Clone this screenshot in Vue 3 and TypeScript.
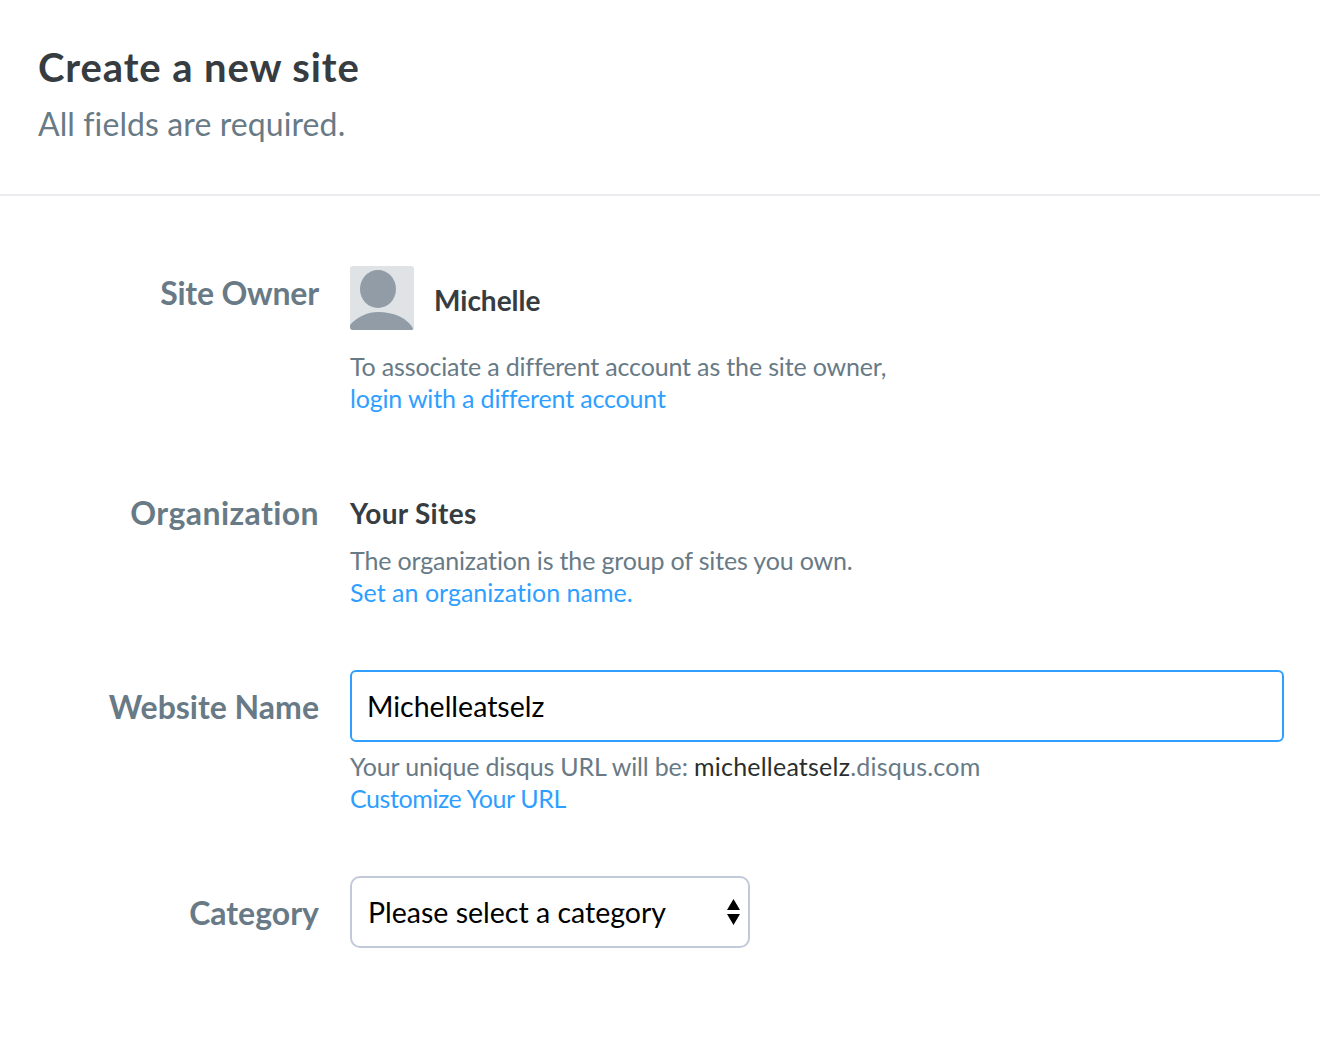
<script setup lang="ts">
const ownerName = 'Michelle'
</script>

<template>
  <div class="page">
    <header class="head">
      <h1>Create a new site</h1>
      <p>All fields are required.</p>
    </header>
    <form class="form" @submit.prevent>
      <div class="row row-owner">
        <div class="label">Site Owner</div>
        <div class="field">
          <div class="owner">
            <svg class="avatar" width="64" height="64" viewBox="0 0 64 64">
              <rect width="64" height="64" fill="#dfe3e6" />
              <ellipse cx="28" cy="23" rx="18" ry="19" fill="#919ca6" />
              <path d="M0 59C8 50 18 46 28 46C44 46 58 52 64 64H0Z" fill="#919ca6" />
            </svg>
            <span class="owner-name">{{ ownerName }}</span>
          </div>
          <p class="help">To associate a different account as the site owner,<br /><a href="#">login with a different account</a></p>
        </div>
      </div>
      <div class="row row-org">
        <div class="label">Organization</div>
        <div class="field">
          <div class="org">Your Sites</div>
          <p class="help help-org">The organization is the group of sites you own.<br /><a href="#">Set an organization name.</a></p>
        </div>
      </div>
      <div class="row row-name">
        <div class="label">Website Name</div>
        <div class="field">
          <input class="input" type="text" value="Michelleatselz" />
          <p class="help help-url">Your unique disqus URL will be: <span class="slug">michelleatselz</span><span class="domain">.disqus.com</span><br /><a href="#">Customize Your URL</a></p>
        </div>
      </div>
      <div class="row row-cat">
        <div class="label">Category</div>
        <div class="field">
          <div class="select">
            <span>Please select a category</span>
            <svg class="arrows" width="13" height="26" viewBox="0 0 13 26">
              <path d="M6.5 0L13 11H0Z M0 15H13L6.5 26Z" fill="#000" />
            </svg>
          </div>
        </div>
      </div>
    </form>
  </div>
</template>

<style scoped>
.page {
  width: 1320px;
  height: 1056px;
  background: #fff;
  font-family: Lato, "Open Sans", sans-serif;
  font-variant-ligatures: none;
  overflow: hidden;
}
.head {
  height: 196px;
  box-sizing: border-box;
  padding: 42px 38px 0;
  border-bottom: 2px solid #ebedf0;
}
h1 {
  margin: 0;
  font-size: 40px;
  line-height: 50px;
  font-weight: 700;
  letter-spacing: 0.9px;
  color: #363c3f;
}
.head p {
  margin: 10px 0 0;
  font-size: 32px;
  line-height: 44px;
  letter-spacing: 0.1px;
  color: #687a86;
}
.form {
  padding-right: 36px;
}
.row {
  display: flex;
}
.label {
  width: 319px;
  flex: none;
  text-align: right;
  font-size: 32px;
  line-height: 40px;
  font-weight: 700;
  color: #687a86;
}
.field {
  flex: 1;
  margin-left: 31px;
}
.row-owner { padding-top: 70px; }
.row-owner .label { padding-top: 7px; letter-spacing: -0.2px; }
.row-org { padding-top: 78px; }
.row-org .label { padding-top: 1px; letter-spacing: 0.4px; }
.row-name { padding-top: 62px; }
.row-name .label { padding-top: 17px; }
.row-cat { padding-top: 62px; }
.row-cat .label { padding-top: 17px; }
.owner {
  display: flex;
  align-items: center;
  gap: 20px;
}
.avatar {
  border-radius: 3px;
}
.owner-name, .org {
  font-size: 28px;
  font-weight: 700;
  color: #363c3f;
}
.owner-name {
  padding-top: 4px;
}
.org {
  line-height: 34px;
  margin-top: 4px;
  letter-spacing: 0.3px;
}
.help {
  margin: 20px 0 0;
  font-size: 25px;
  line-height: 32px;
  letter-spacing: -0.16px;
  color: #687a86;
}
.help-org {
  margin-top: 14px;
}
.help-org a {
  letter-spacing: 0.02px;
}
.help-url {
  margin-top: 8px;
}
.help-url a {
  letter-spacing: -0.42px;
}
.help a {
  color: #2e9fff;
  text-decoration: none;
}
.slug, .domain { letter-spacing: 0.22px; }
.slug { color: #2a2e2e; }
.input {
  display: block;
  width: 100%;
  height: 72px;
  box-sizing: border-box;
  border: 2px solid #2e9fff;
  border-radius: 6px;
  padding: 0 15px;
  font: 28.5px Lato, "Open Sans", sans-serif;
  font-variant-ligatures: none;
  color: #000;
  outline: none;
}
.select {
  display: flex;
  align-items: center;
  justify-content: space-between;
  width: 400px;
  height: 72px;
  box-sizing: border-box;
  border: 2px solid #c2c9d9;
  border-radius: 10px;
  padding: 0 8px 0 16px;
  font-size: 28.5px;
  color: #000;
}
</style>

<style>
body { margin: 0; }
</style>
